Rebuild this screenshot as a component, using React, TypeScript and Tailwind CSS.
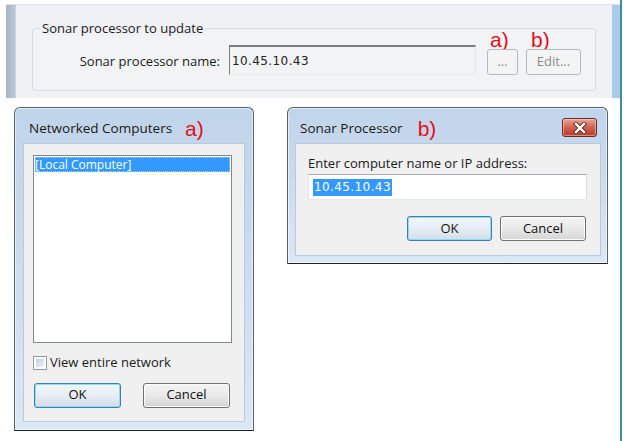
const ui = "font-['Open_Sans',_'Noto_Sans',_sans-serif]";
const mono = "font-['DejaVu_Sans',_sans-serif]";

function Note({ children, className = "" }: { children: string; className?: string }) {
  return (
    <span className={`font-['Liberation_Sans',_Arial,_sans-serif] text-[21px] leading-[22px] text-[#e30f1a] ${className}`}>
      {children}
    </span>
  );
}

function WinButton({ label, primary = false, disabled = false, className = "" }: { label: string; primary?: boolean; disabled?: boolean; className?: string }) {
  if (disabled) {
    return (
      <div className={`flex items-center justify-center rounded-[3px] border border-[#b5b9bc] bg-[#f4f4f4] text-[13px] text-[#8a8a8a] ${className}`}>
        {label}
      </div>
    );
  }
  return (
    <div
      className={`flex items-center justify-center rounded-[3px] border text-[13px] text-[#111] ${
        primary
          ? "border-[#3c7fb1] bg-gradient-to-b from-[#f3f7fa] via-[#e6eef4] to-[#d3dde6] shadow-[inset_0_0_0_1px_#8fdcf7]"
          : "border-[#707070] bg-gradient-to-b from-[#f4f4f4] via-[#e9e9e9] to-[#d4d4d4] shadow-[inset_0_0_0_1px_#fcfcfc]"
      } ${className}`}
    >
      {label}
    </div>
  );
}

function CloseButton() {
  return (
    <div className="flex h-[19px] w-[35px] items-center justify-center rounded-[3px] border border-[#6b2a25] bg-gradient-to-b from-[#e8a597] via-[#d0624f] to-[#b8392b] shadow-[inset_0_0_0_1px_rgba(255,220,210,0.5)]">
      <svg width="14" height="12" viewBox="0 0 14 12">
        <path d="M3 2 L11 10 M11 2 L3 10" stroke="#5a2620" strokeWidth="4.2" strokeLinecap="square" />
        <path d="M3 2 L11 10 M11 2 L3 10" stroke="#ffffff" strokeWidth="2.4" strokeLinecap="square" />
      </svg>
    </div>
  );
}

function Frame({ className = "", children }: { className?: string; children: React.ReactNode }) {
  return (
    <div
      className={`flex flex-col rounded-t-[6px] border border-[#56616d] border-b-[#222] bg-gradient-to-b from-[#c0d4ea] via-[#cddcee] to-[#dae7f5] shadow-[inset_0_0_0_1px_rgba(255,255,255,0.55)] ${className}`}
    >
      {children}
    </div>
  );
}

export default function App() {
  return (
    <div className={`flex h-[441px] w-[630px] overflow-hidden bg-white ${ui}`}>
      <div className="flex w-[620px] flex-col">
        {/* Top panel */}
        <div className="ml-[6px] mt-[4px] flex h-[94px] w-[614px] border-t border-[#dfe3e8]">
          <div className="w-[10px] border-r border-[#c8d3de] bg-gradient-to-r from-[#a7b6c7] to-[#bac7d5]" />
          <div className="flex-1 bg-[#eff1f4] px-[16px] pt-[23px]">
            <div className="relative flex h-[63px] items-end rounded-[3px] border border-[#d5dce2] bg-[#f1f3f5] pb-[15px] pl-[44px]">
              <span className="absolute left-[7px] top-[-9px] bg-[#eff1f4] px-[2px] text-[13px] leading-[16px] text-[#1b1b1b]">
                Sonar processor to update
              </span>
              <span className="mb-[6px] w-[143px] text-right text-[13px] leading-[16px] text-[#1b1b1b]">Sonar processor name:</span>
              <div className="ml-[9px] flex h-[30px] w-[247px] items-center border-l border-t-2 border-r border-b border-l-[#7d7d7d] border-t-[#7d7d7d] border-r-[#e2e4e6] border-b-[#e8eaec] bg-[#f1f3f5] pl-[2px]">
                <span className={`${mono} text-[12px] tracking-[0.4px] text-[#222]`}>10.45.10.43</span>
              </div>
              <div className="ml-[11px] flex flex-col">
                <Note className="pl-[3px]">a)</Note>
                <WinButton label="..." disabled className="-mt-[2px] h-[26px] w-[31px]" />
              </div>
              <div className="ml-[8px] flex flex-col">
                <Note className="pl-[5px]">b)</Note>
                <WinButton label="Edit..." disabled className="-mt-[2px] h-[26px] w-[55px]" />
              </div>
            </div>
          </div>
          <div className="w-[8px] bg-[#a9cbe8]" />
        </div>

        {/* Dialogs */}
        <div className="ml-[14px] mt-[9px] flex items-start gap-[33px]">
          {/* Networked Computers */}
          <Frame className="h-[324px] w-[240px]">
            <div className="flex h-[35px] items-center pl-[14px] pt-[6px]">
              <span className="text-[13.5px] text-[#1a1a1a]">Networked Computers</span>
              <Note className="ml-[13px]">a)</Note>
            </div>
            <div className="mx-[8px] flex h-[279px] w-[222px] flex-col border border-[#b9cadc] bg-[#f0f0f0] px-[9px]">
              <div className="mt-[11px] h-[188px] w-[199px] border border-[#828790] bg-white p-[1px]">
                <div className="flex h-[15px] items-center bg-[#3399ff] text-[12px] leading-[15px] text-white outline-dotted outline-1 -outline-offset-1 outline-[#a8d2ff]">
                  [Local Computer]
                </div>
              </div>
              <div className="mt-[10px] flex items-center gap-[3px]">
                <div className="h-[14px] w-[14px] border border-[#8e9aa7] bg-white p-[2px]">
                  <div className="h-full w-full bg-gradient-to-br from-[#bfcfe0] to-[#eef3f8]" />
                </div>
                <span className="text-[13px] text-[#1a1a1a]">View entire network</span>
              </div>
              <div className="mt-[10px] flex gap-[22px] pl-[1px]">
                <WinButton label="OK" primary className="h-[25px] w-[87px]" />
                <WinButton label="Cancel" className="h-[25px] w-[87px]" />
              </div>
            </div>
          </Frame>

          {/* Sonar Processor */}
          <Frame className="h-[157px] w-[321px]">
            <div className="flex h-[35px] items-start">
              <div className="flex h-full items-center pl-[12px] pt-[6px]">
                <span className="text-[13.5px] text-[#1a1a1a]">Sonar Processor</span>
                <Note className="ml-[15px]">b)</Note>
              </div>
              <div className="ml-auto mr-[10px] mt-[10px]">
                <CloseButton />
              </div>
            </div>
            <div className="mx-[7px] flex h-[113px] w-[306px] flex-col border border-[#b9cadc] bg-[#f0f0f0] px-[12px]">
              <span className="mt-[11px] text-[13px] leading-[17px] text-[#1a1a1a]">Enter computer name or IP address:</span>
              <div className="mt-[2px] flex h-[26px] w-[279px] items-center border border-[#abadb3] border-l-[#e2e3ea] border-r-[#dbdfe6] border-b-[#e3e9ef] bg-white pl-[4px]">
                <span className={`${mono} bg-[#3399ff] px-[1px] text-[12px] leading-[17px] tracking-[0.4px] text-white`}>10.45.10.43</span>
              </div>
              <div className="mt-[16px] flex justify-end gap-[8px] pr-[2px]">
                <WinButton label="OK" primary className="h-[25px] w-[85px]" />
                <WinButton label="Cancel" className="h-[25px] w-[86px]" />
              </div>
            </div>
          </Frame>
        </div>
      </div>
      <div className="h-full w-[2px] bg-[#3a8caa]" />
    </div>
  );
}
